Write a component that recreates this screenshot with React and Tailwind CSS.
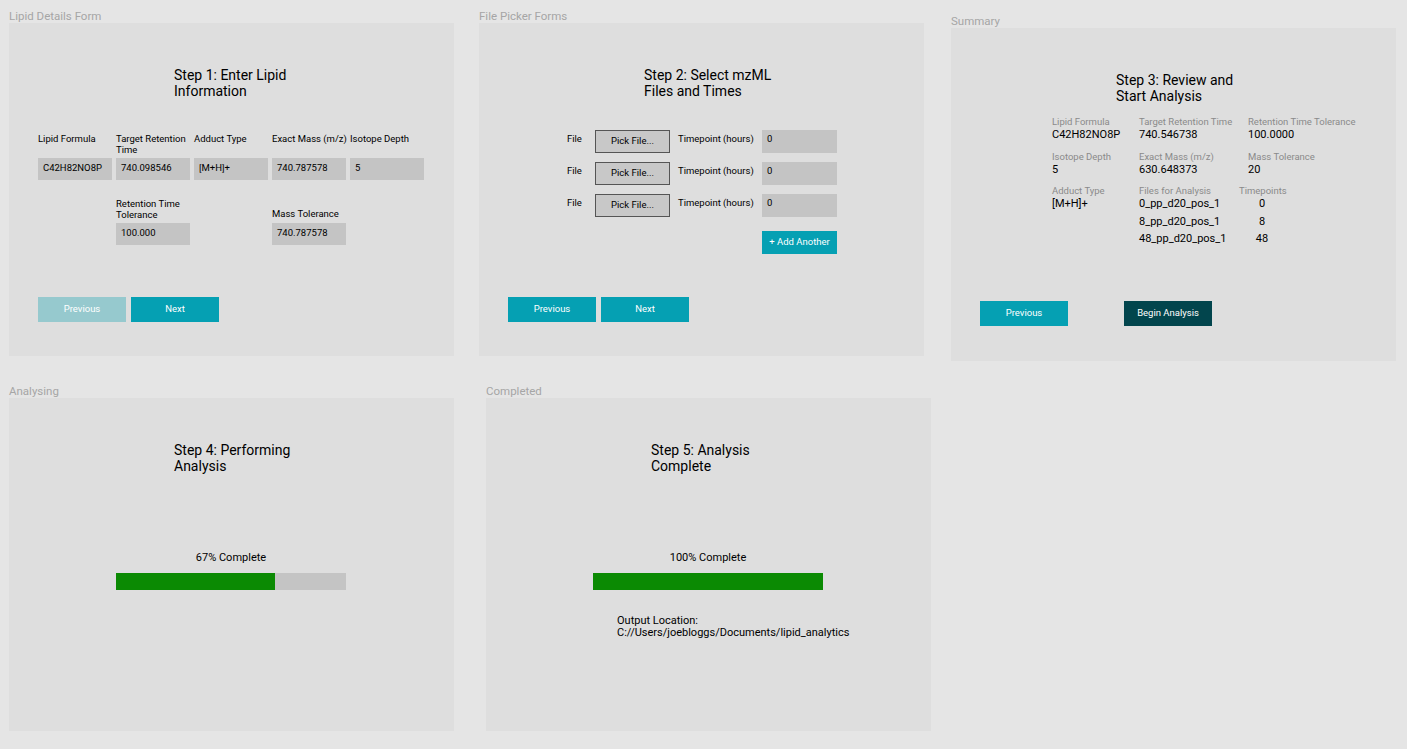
import React from "react";

const Frame = ({ label, className = "", children }) => (
  <div className={`flex flex-col w-[445px] ${className}`}>
    <div className="h-[14px] leading-[14px] text-[11.5px] text-[#a6a6a6] whitespace-nowrap">{label}</div>
    <div className="relative h-[333px] bg-[#dedede]">{children}</div>
  </div>
);

const Title = ({ lines }) => (
  <div className="ml-[165px] pt-[44px] text-[14px] leading-[16px] text-black whitespace-nowrap">
    {lines[0]}
    <br />
    {lines[1]}
  </div>
);

const Btn = ({ children, className = "" }) => (
  <button className={`w-[88px] h-[25px] flex items-center justify-center text-[9.5px] text-white ${className}`}>
    {children}
  </button>
);

const Field = ({ label, value, bottom }) => (
  <div className="flex flex-col w-[74px]">
    <div className={`h-[26px] flex flex-col text-[9.5px] leading-[11px] text-black whitespace-nowrap ${bottom ? "justify-end pb-[4px]" : "pt-[1px]"}`}>
      {label}
    </div>
    <div className="h-[22px] bg-[#c4c4c4] pl-[5px] pt-[4px] text-[9.5px] leading-[12px] text-black">{value}</div>
  </div>
);

const LipidForm = () => (
  <Frame label="Lipid Details Form">
    <Title lines={["Step 1: Enter Lipid", "Information"]} />
    <div className="ml-[29px] mt-[33px] flex gap-[4px]">
      <Field label="Lipid Formula" value="C42H82NO8P" />
      <Field label={<>Target Retention<br />Time</>} value="740.098546" />
      <Field label="Adduct Type" value="[M+H]+" />
      <Field label="Exact Mass (m/z)" value="740.787578" />
      <Field label="Isotope Depth" value="5" />
    </div>
    <div className="ml-[29px] mt-[17px] flex gap-[4px]">
      <div className="w-[74px]" />
      <Field label={<>Retention Time<br />Tolerance</>} value="100.000" />
      <div className="w-[74px]" />
      <Field label="Mass Tolerance" value="740.787578" bottom />
    </div>
    <div className="ml-[29px] mt-[52px] flex gap-[5px]">
      <Btn className="bg-[#96c9ce]">Previous</Btn>
      <Btn className="bg-[#05a0b3]">Next</Btn>
    </div>
  </Frame>
);

const FileRow = () => (
  <div className="ml-[88px] flex items-start h-[23px]">
    <div className="w-[28px] pt-[3px] text-[9.5px] leading-[12px] text-black">File</div>
    <button className="w-[75px] h-[23px] border border-[#555555] bg-[#c8c8c8] text-[9.5px] text-black flex items-center justify-center">
      Pick File...
    </button>
    <div className="w-[84px] ml-[8px] pt-[3px] text-[9.5px] leading-[12px] text-black whitespace-nowrap">Timepoint (hours)</div>
    <div className="w-[75px] h-[23px] bg-[#c4c4c4] pl-[5px] pt-[3px] text-[9.5px] leading-[12px] text-black">0</div>
  </div>
);

const FilePicker = () => (
  <Frame label="File Picker Forms" className="ml-[25px]">
    <Title lines={["Step 2: Select mzML", "Files and Times"]} />
    <div className="mt-[31px] flex flex-col gap-[9px]">
      <FileRow />
      <FileRow />
      <FileRow />
    </div>
    <div className="mt-[14px] ml-[283px]">
      <button className="w-[75px] h-[23px] bg-[#05a0b3] text-[9.5px] text-white flex items-center justify-center">
        + Add Another
      </button>
    </div>
    <div className="ml-[29px] mt-[43px] flex gap-[5px]">
      <Btn className="bg-[#05a0b3]">Previous</Btn>
      <Btn className="bg-[#05a0b3]">Next</Btn>
    </div>
  </Frame>
);

const Item = ({ label, value, className = "" }) => (
  <div className={`flex flex-col ${className}`}>
    <div className="text-[9.5px] leading-[12px] text-[#8a8a8a] whitespace-nowrap">{label}</div>
    <div className="text-[11px] leading-[14px] text-black">{value}</div>
  </div>
);

const Summary = () => (
  <Frame label="Summary" className="ml-[27px] mt-[5px]">
    <Title lines={["Step 3: Review and", "Start Analysis"]} />
    <div className="ml-[101px] mt-[12px] flex flex-col">
      <div className="flex">
        <Item className="w-[87px]" label="Lipid Formula" value="C42H82NO8P" />
        <Item className="w-[109px]" label="Target Retention Time" value="740.546738" />
        <Item label="Retention Time Tolerance" value="100.0000" />
      </div>
      <div className="flex mt-[9px]">
        <Item className="w-[87px]" label="Isotope Depth" value="5" />
        <Item className="w-[109px]" label="Exact Mass (m/z)" value="630.648373" />
        <Item label="Mass Tolerance" value="20" />
      </div>
      <div className="flex mt-[8px]">
        <Item className="w-[87px]" label="Adduct Type" value="[M+H]+" />
        <div className="flex flex-col w-[100px]">
          <div className="text-[9.5px] leading-[12px] text-[#8a8a8a]">Files for Analysis</div>
          <div className="flex flex-col gap-[3.5px] text-[11px] leading-[14px] text-black">
            <span>0_pp_d20_pos_1</span>
            <span>8_pp_d20_pos_1</span>
            <span>48_pp_d20_pos_1</span>
          </div>
        </div>
        <div className="flex flex-col w-[46px]">
          <div className="text-[9.5px] leading-[12px] text-[#8a8a8a]">Timepoints</div>
          <div className="flex flex-col gap-[3.5px] text-[11px] leading-[14px] text-black text-center">
            <span>0</span>
            <span>8</span>
            <span>48</span>
          </div>
        </div>
      </div>
    </div>
    <div className="ml-[29px] mt-[55px] flex gap-[56px]">
      <Btn className="bg-[#05a0b3]">Previous</Btn>
      <Btn className="bg-[#02454d]">Begin Analysis</Btn>
    </div>
  </Frame>
);

const Progress = ({ pct, text }) => (
  <div className="ml-[107px] w-[230px] mt-[77px] flex flex-col">
    <div className="text-[11px] leading-[13px] text-black text-center">{text}</div>
    <div className="mt-[9px] h-[17px] bg-[#c4c4c4]">
      <div className="h-full bg-[#0b8a03]" style={{ width: `${pct}%` }} />
    </div>
  </div>
);

const Analysing = () => (
  <Frame label="Analysing">
    <Title lines={["Step 4: Performing", "Analysis"]} />
    <Progress pct={69} text="67% Complete" />
  </Frame>
);

const Completed = () => (
  <Frame label="Completed" className="ml-[32px]">
    <Title lines={["Step 5: Analysis", "Complete"]} />
    <Progress pct={100} text="100% Complete" />
    <div className="ml-[131px] mt-[25px] text-[11px] leading-[12px] text-black">
      Output Location:
      <br />
      C://Users/joebloggs/Documents/lipid_analytics
    </div>
  </Frame>
);

export default function App() {
  return (
    <div className="w-[1407px] h-[749px] overflow-hidden bg-[#e5e5e5] font-['Roboto',sans-serif]">
      <div className="flex items-start pt-[9px] pl-[9px]">
        <LipidForm />
        <FilePicker />
        <Summary />
      </div>
      <div className="flex items-start pl-[9px] mt-[23px]">
        <Analysing />
        <Completed />
      </div>
    </div>
  );
}
